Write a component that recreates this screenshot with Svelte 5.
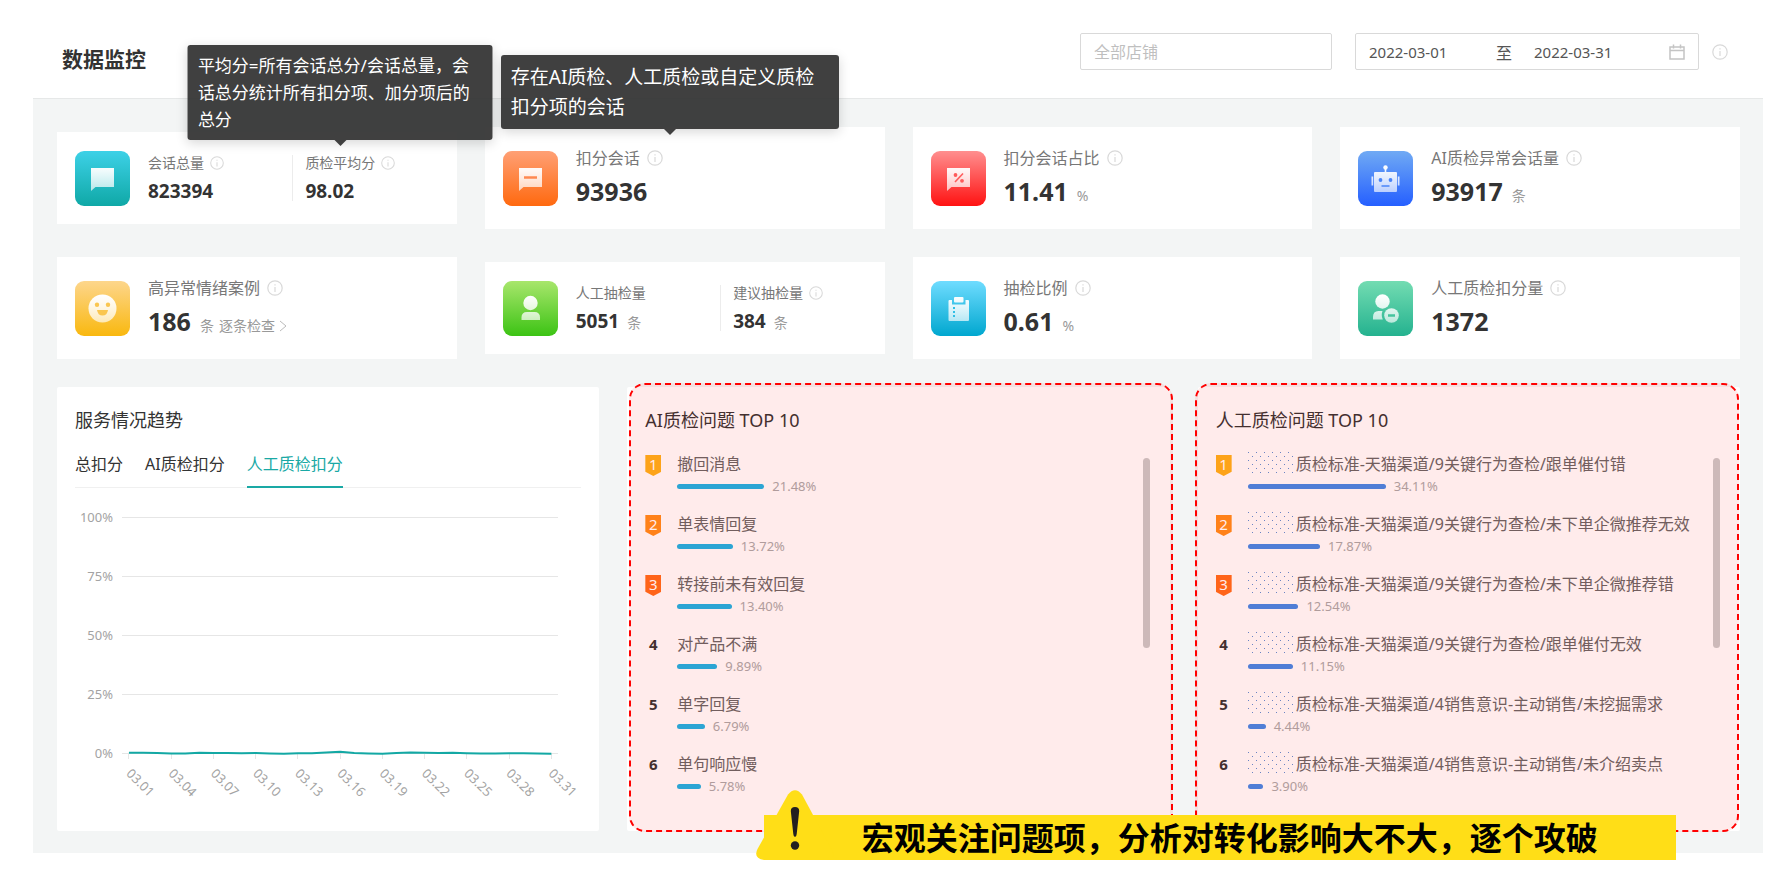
<script lang="ts">
  type Metric = { label: string; value: string; unit?: string; info?: boolean; link?: string; tip?: string };
  type Card = { icon: string; items: Metric[]; tip?: string };
  type Issue = { name: string; rate: number; masked?: boolean };

  const cards: Card[] = [
    {
      icon: 'chat',
      items: [
        { label: '会话总量', value: '823394', info: true },
        {
          label: '质检平均分',
          value: '98.02',
          info: true,
          tip: '平均分=所有会话总分/会话总量，会话总分统计所有扣分项、加分项后的总分',
        },
      ],
    },
    {
      icon: 'minus',
      items: [{ label: '扣分会话', value: '93936', info: true }],
      tip: '存在AI质检、人工质检或自定义质检扣分项的会话',
    },
    { icon: 'percent', items: [{ label: '扣分会话占比', value: '11.41', unit: '%', info: true }] },
    { icon: 'robot', items: [{ label: 'AI质检异常会话量', value: '93917', unit: '条', info: true }] },
    { icon: 'smile', items: [{ label: '高异常情绪案例', value: '186', unit: '条', info: true, link: '逐条检查' }] },
    {
      icon: 'person',
      items: [
        { label: '人工抽检量', value: '5051', unit: '条' },
        { label: '建议抽检量', value: '384', unit: '条', info: true },
      ],
    },
    { icon: 'clipboard', items: [{ label: '抽检比例', value: '0.61', unit: '%', info: true }] },
    { icon: 'deduct', items: [{ label: '人工质检扣分量', value: '1372', info: true }] },
  ];

  const aiIssues: Issue[] = [
    { name: '撤回消息', rate: 21.48 },
    { name: '单表情回复', rate: 13.72 },
    { name: '转接前未有效回复', rate: 13.4 },
    { name: '对产品不满', rate: 9.89 },
    { name: '单字回复', rate: 6.79 },
    { name: '单句响应慢', rate: 5.78 },
  ];

  const manualIssues: Issue[] = [
    { name: '质检标准-天猫渠道/9关键行为查检/跟单催付错', rate: 34.11, masked: true },
    { name: '质检标准-天猫渠道/9关键行为查检/未下单企微推荐无效', rate: 17.87, masked: true },
    { name: '质检标准-天猫渠道/9关键行为查检/未下单企微推荐错', rate: 12.54, masked: true },
    { name: '质检标准-天猫渠道/9关键行为查检/跟单催付无效', rate: 11.15, masked: true },
    { name: '质检标准-天猫渠道/4销售意识-主动销售/未挖掘需求', rate: 4.44, masked: true },
    { name: '质检标准-天猫渠道/4销售意识-主动销售/未介绍卖点', rate: 3.9, masked: true },
  ];

  const tabs = ['总扣分', 'AI质检扣分', '人工质检扣分'];
  let activeTab = $state(2);
  let shop = $state('');
  let startDate = $state('2022-03-01');
  let endDate = $state('2022-03-31');

  // chart geometry, in viewBox units
  const left = 54;
  const right = 477;
  const top = 30;
  const bottom = 266;
  const levels = [100, 75, 50, 25, 0];
  const days = ['03.01', '03.04', '03.07', '03.10', '03.13', '03.16', '03.19', '03.22', '03.25', '03.28', '03.31'];
  const series = [
    0.4, 0.4, 0.3, 0.1, 0.1, 0.4, 0.3, 0.3, 0.2, 0.3, 0.1, 0, 0.2, 0.2, 0.5, 0.8, 0.3, 0.1, 0, 0.3, 0.5, 0.4, 0.3,
    0.4, 0.2, 0.1, 0.1, 0.2, 0.2, 0.1, 0,
  ];

  const yOf = (v: number) => bottom - (v / 100) * (bottom - top);
  const xOf = (i: number, n: number) => left + (i / (n - 1)) * (right - left);
  const points = series.map((v, i) => `${xOf(i, series.length)},${yOf(v)}`).join(' ');
</script>

{#snippet infoIcon()}
  <svg class="info" viewBox="0 0 16 16" aria-hidden="true">
    <circle cx="8" cy="8" r="7.2" />
    <path d="M8 7v5M8 4.2v1.3" />
  </svg>
{/snippet}

{#snippet cardIcon(name: string)}
  <svg class="icon {name}" viewBox="0 0 55 55" aria-hidden="true">
    {#if name === 'chat'}
      <path class="glyph" d="M16 17h23v19H20.500l-4.500 4z" />
    {:else if name === 'minus'}
      <path class="glyph" d="M16 17h23v19H20.500l-4.500 4z" />
      <path class="cut" d="M21 26.500h13" />
    {:else if name === 'percent'}
      <path class="glyph" d="M16 17h23v19H20.500l-4.500 4z" />
      <path class="cut thin" d="M24 31l8-8.500" />
      <circle class="dot" cx="24.500" cy="24" r="1.900" />
      <circle class="dot" cx="31" cy="29.800" r="1.900" />
    {:else if name === 'robot'}
      <path class="glyph" d="M26.700 17.500h1.600V21H38q1 0 1 1v18q0 1-1 1H17q-1 0-1-1V22q0-1 1-1h9.700z" />
      <circle class="glyph" cx="27.500" cy="16.500" r="2.200" />
      <path class="glyph" d="M13.500 25.500h1.700v9h-1.700zM39.800 25.500h1.700v9h-1.700z" />
      <circle class="dot" cx="22.500" cy="29" r="1.900" />
      <circle class="dot" cx="32.500" cy="29" r="1.900" />
      <path class="cut thin" d="M23.500 35h8" />
    {:else if name === 'smile'}
      <circle class="glyph" cx="27.500" cy="27.500" r="14" />
      <circle class="dot" cx="22" cy="23.800" r="2.200" />
      <circle class="dot" cx="33" cy="23.800" r="2.200" />
      <path class="dot" d="M22 29h11q-.8 5.500-5.500 5.500T22 29z" />
    {:else if name === 'person'}
      <circle class="glyph" cx="27.500" cy="22" r="7.200" />
      <path class="glyph" d="M18.500 39v-2.500q0-5.500 5.500-5.500h7.500q5.500 0 5.500 5.500V39z" />
    {:else if name === 'clipboard'}
      <path class="glyph" d="M18.500 19H21v4.500h13.500V19h2.500q1 0 1 1v19q0 1-1 1H18.500q-1 0-1-1V20q0-1 1-1z" />
      <rect class="glyph" x="23" y="16" width="9.500" height="5.500" rx="1" />
      <path class="cut dash" d="M23 26v11" />
    {:else}
      <circle class="glyph" cx="24.500" cy="20.500" r="7.200" />
      <path class="glyph" d="M15 38.500V36q0-6 5.500-6h4q-1.700 4.200.3 8.500z" />
      <circle class="glyph" cx="33.500" cy="34.500" r="7.300" />
      <path class="cut" d="M30 34.500h7" />
    {/if}
  </svg>
{/snippet}

{#snippet issuePanel(title: string, issues: Issue[], tone: string)}
  <section class="panel flagged {tone}">
    <h2>{title}</h2>
    <div class="scroll">
      <ol>
        {#each issues as issue, i}
          <li>
            <span class="rank rank-{i + 1}" class:medal={i < 3}>{i + 1}</span>
            <div class="issue">
              <div class="name">
                {#if issue.masked}<span class="mask"></span>{/if}{issue.name}
              </div>
              <div class="rate">
                <span class="bar" style="width: {issue.rate * 0.87}%"></span>
                <span>{issue.rate.toFixed(2)}%</span>
              </div>
            </div>
          </li>
        {/each}
      </ol>
      <div class="thumb"></div>
    </div>
  </section>
{/snippet}

<svg class="defs" aria-hidden="true">
  <linearGradient id="glyph-fade" gradientUnits="userSpaceOnUse" x1="0" y1="14" x2="0" y2="42">
    <stop offset="0" stop-color="#fff" />
    <stop offset="1" stop-color="#fff" stop-opacity="0.65" />
  </linearGradient>
</svg>

<div class="page">
  <header>
    <h1>数据监控</h1>
    <input class="shop" type="text" placeholder="全部店铺" aria-label="店铺" bind:value={shop} />
    <div class="range">
      <input type="text" aria-label="开始日期" bind:value={startDate} />
      <span class="to">至</span>
      <input type="text" aria-label="结束日期" bind:value={endDate} />
      <svg class="calendar" viewBox="0 0 16 16" aria-hidden="true">
        <path d="M1 3h14v12H1zM1 6.500h14M4.500 0.500v4M11.500 0.500v4" />
      </svg>
    </div>
    {@render infoIcon()}
  </header>

  <main>
    <div class="cards">
      {#each cards as card}
        <article class="card" class:split={card.items.length > 1}>
          {@render cardIcon(card.icon)}
          <div class="metrics">
            {#each card.items as item}
              <div class="metric">
                <div class="label">
                  <span class="anchor">
                    {item.label}
                    {#if item.tip}<span class="tip" role="tooltip">{item.tip}</span>{/if}
                  </span>
                  {#if item.info}{@render infoIcon()}{/if}
                </div>
                <div class="value">
                  <strong>{item.value}</strong>
                  {#if item.unit}<span class="unit">{item.unit}</span>{/if}
                  {#if item.link}
                    <a href="#cases">
                      {item.link}
                      <svg class="arrow" viewBox="0 0 8 12" aria-hidden="true"><path d="M1 1l6 5-6 5" /></svg>
                    </a>
                  {/if}
                </div>
              </div>
            {/each}
          </div>
          {#if card.tip}<span class="tip large" role="tooltip">{card.tip}</span>{/if}
        </article>
      {/each}
    </div>

    <div class="panels">
      <section class="panel">
        <h2>服务情况趋势</h2>
        <div class="tabs" role="tablist">
          {#each tabs as tab, i}
            <button role="tab" aria-selected={i === activeTab} class:active={i === activeTab} onclick={() => (activeTab = i)}>{tab}</button>
          {/each}
        </div>
        <svg class="chart" viewBox="0 0 507 324" role="img" aria-label="服务情况趋势">
          {#each levels as level}
            <line class="grid" x1="47" x2="484" y1={yOf(level)} y2={yOf(level)} />
            <text x="38" y={yOf(level)} dy="4" text-anchor="end">{level}%</text>
          {/each}
          {#each days as day, i}
            <line class="grid" x1={xOf(i, days.length)} x2={xOf(i, days.length)} y1={bottom} y2={bottom + 5} />
            <text transform="translate({xOf(i, days.length)} {bottom + 17}) rotate(45)" dy="5">{day}</text>
          {/each}
          <polyline {points} />
        </svg>
      </section>

      {@render issuePanel('AI质检问题 TOP 10', aiIssues, 'sky')}
      {@render issuePanel('人工质检问题 TOP 10', manualIssues, 'indigo')}

      <div class="banner">
        <svg class="warning" viewBox="0 0 78 70" aria-hidden="true">
          <path class="sign" d="M32 4.500Q39-4 46 4.500L76.500 61q3 9-6 9H8Q-3 68 1.500 59z" />
          <path d="M34.800 21q0-4 4.200-4t4.200 4l-2.500 23q-.3 3-1.700 3t-1.700-3z" />
          <circle cx="39" cy="55.500" r="4.200" />
        </svg>
        <p>宏观关注问题项，分析对转化影响大不大，逐个攻破</p>
      </div>
    </div>
  </main>
</div>

<style>
  :global(body) {
    margin: 0;
    background: #fff;
  }

  .page {
    padding: 0 25px 24px 33px;
    font-family: "Noto Sans", "Noto Sans CJK SC", sans-serif;
    font-size: 16px;
    color: #333;
  }

  .page * {
    box-sizing: border-box;
  }

  .defs {
    position: absolute;
    width: 0;
    height: 0;
  }

  h1, h2, p, ol {
    margin: 0;
    padding: 0;
  }

  input, button {
    font: inherit;
    color: inherit;
    border: 0;
    padding: 0;
    background: none;
    outline: none;
  }

  header {
    display: flex;
    align-items: flex-start;
    padding: 33px 35px 13px 29px;
    border-bottom: 1px solid #e6e8e8;
  }

  h1 {
    flex: 1;
    font-size: 21px;
    line-height: 52px;
    font-weight: 700;
  }

  .shop,
  .range {
    height: 37px;
    border: 1px solid #d9d9d9;
    border-radius: 2px;
    padding: 0 13px;
  }

  .shop {
    width: 252px;
    margin-right: 23px;
  }

  .shop::placeholder {
    color: #bfbfbf;
  }

  .range {
    display: flex;
    align-items: center;
    width: 344px;
    margin-right: 13px;
    color: #555;
    font-size: 15px;
  }

  .range input {
    width: 127px;
  }

  .to {
    width: 38px;
    font-size: 16px;
  }

  .range input + svg {
    margin-left: auto;
  }

  .calendar {
    flex: none;
    width: 16px;
    height: 16px;
    fill: none;
    stroke: #c4c4c4;
    stroke-width: 1.5;
  }

  .info {
    flex: none;
    width: 16px;
    height: 16px;
    fill: none;
    stroke: #d9d9d9;
    stroke-width: 1.2;
  }

  header .info {
    margin-top: 11px;
  }

  main {
    padding: 28px 23px 22px 24px;
    background: #f3f5f5;
  }

  .cards {
    display: grid;
    grid-template-columns: repeat(4, 1fr);
    align-items: center;
    gap: 28px;
  }

  .card {
    position: relative;
    display: flex;
    align-items: center;
    gap: 18px;
    padding: 18px;
    background: #fff;
  }

  .icon {
    flex: none;
    width: 55px;
    height: 55px;
    border-radius: 9px;
  }

  .glyph {
    fill: url(#glyph-fade);
  }

  .dot {
    fill: var(--mid);
  }

  .cut {
    fill: none;
    stroke: var(--mid);
    stroke-width: 2.4;
  }

  .thin {
    stroke-width: 1.6;
  }

  .dash {
    stroke-width: 2;
    stroke-dasharray: 2 2;
  }

  .chat { background: linear-gradient(#3dd1e7, #0fa8a6); }
  .minus { --mid: #ff8850; background: linear-gradient(#ffa075, #ff690f); }
  .percent { --mid: #ff5a5a; background: linear-gradient(#ff8f8f, #ff1212); }
  .robot { --mid: #4a84f8; background: linear-gradient(#70aaf4, #255fff); }
  .smile { --mid: #fac650; background: linear-gradient(#fdd68c, #f9b80f); }
  .person { background: linear-gradient(#a8e66c, #3cc314); }
  .clipboard { --mid: #30bfe6; background: linear-gradient(#6fdcff, #00a7cf); }
  .deduct { --mid: #45c49d; background: linear-gradient(#73dcb2, #24b28f); }

  .metrics {
    flex: 1;
    display: grid;
    grid-auto-flow: column;
    grid-auto-columns: 1fr;
  }

  .label {
    display: flex;
    align-items: center;
    gap: 7px;
    line-height: 26px;
    color: #777;
    white-space: nowrap;
  }

  .anchor {
    position: relative;
  }

  .value {
    display: flex;
    align-items: baseline;
    line-height: 40px;
  }

  .value strong {
    font-size: 25px;
  }

  .unit,
  .value a {
    font-size: 14px;
    line-height: 20px;
    color: #999;
  }

  .unit {
    margin-left: 9px;
  }

  .value a {
    margin-left: 5px;
    text-decoration: none;
  }

  .arrow {
    width: 8px;
    height: 12px;
    fill: none;
    stroke: #bbb;
    vertical-align: -1px;
  }

  .split .metric + .metric {
    position: relative;
    padding-left: 12px;
  }

  .split .metric + .metric::before {
    content: "";
    position: absolute;
    left: -1px;
    top: 5px;
    bottom: 5px;
    width: 1px;
    background: #ececec;
  }

  .split .label {
    font-size: 14px;
    gap: 6px;
  }

  .split .info {
    width: 14px;
    height: 14px;
  }

  .split .value {
    line-height: 30px;
  }

  .split .value strong {
    font-size: 19px;
  }

  .split .unit {
    margin-left: 8px;
  }

  .tip {
    position: absolute;
    z-index: 2;
    bottom: calc(100% + 10px);
    left: 50%;
    width: 305px;
    padding: 7px 10px;
    transform: translateX(-50%);
    border-radius: 3px;
    background: rgba(48, 48, 48, 0.92);
    box-shadow: 0 3px 12px rgba(0, 0, 0, 0.16);
    color: #fff;
    font-size: 17px;
    line-height: 27px;
    white-space: normal;
  }

  .tip::after {
    content: "";
    position: absolute;
    top: 100%;
    left: 50%;
    margin-left: -6px;
    border: 6px solid transparent;
    border-top-color: #404040;
    border-bottom: 0;
  }

  .tip.large {
    left: 16px;
    bottom: calc(100% - 2px);
    width: 338px;
    transform: none;
    font-size: 19px;
    line-height: 30px;
  }

  .panels {
    position: relative;
    display: grid;
    grid-template-columns: repeat(3, minmax(0, 1fr));
    gap: 28px;
    margin-top: 28px;
  }

  .panel {
    position: relative;
    padding: 19px 18px;
    background: #fff;
    border-radius: 2px;
  }

  h2 {
    margin-bottom: 18px;
    font-size: 18px;
    line-height: 28px;
    font-weight: 400;
  }

  /* highlight laid over a panel, text included */
  .flagged::after {
    content: "";
    position: absolute;
    inset: -4px -3px -1px 2px;
    border: 2px dashed #f00;
    border-radius: 16px;
    background: rgba(255, 0, 0, 0.08);
    pointer-events: none;
  }

  .indigo::after {
    inset: -4px 1px -1px -3px;
  }

  .tabs {
    display: flex;
    gap: 22px;
    border-bottom: 1px solid #f0f0f0;
  }

  .tabs button {
    margin-bottom: -1px;
    padding-bottom: 10px;
    border-bottom: 2px solid transparent;
    line-height: 24px;
    cursor: pointer;
  }

  .tabs .active {
    color: #1aa9a5;
    border-color: #1aa9a5;
  }

  .chart {
    display: block;
    width: 100%;
    overflow: visible;
  }

  .chart text {
    font-size: 13px;
    fill: #a3a3a3;
  }

  .grid {
    stroke: #e6e6e6;
    shape-rendering: crispEdges;
  }

  .chart polyline {
    fill: none;
    stroke: #13a8a4;
    stroke-width: 2;
  }

  .scroll {
    display: flex;
    align-items: flex-start;
    padding-right: 2px;
  }

  ol {
    flex: 1;
    display: grid;
    gap: 16px;
    list-style: none;
  }

  li {
    display: flex;
    gap: 16px;
  }

  .rank {
    flex: none;
    width: 16px;
    font-size: 15px;
    line-height: 24px;
    font-weight: 700;
    text-align: center;
  }

  .medal {
    height: 21px;
    margin-top: 3px;
    line-height: 18px;
    font-weight: 400;
    color: #fff;
    clip-path: polygon(0 0, 100% 0, 100% 80%, 50% 100%, 0 80%);
  }

  .rank-1 { background: #fdb11c; }
  .rank-2 { background: #ff8d1c; }
  .rank-3 { background: #ff6d1c; }

  .issue {
    flex: 1;
  }

  .name {
    display: flex;
    line-height: 24px;
    color: #666;
    white-space: nowrap;
  }

  .mask {
    width: 45px;
    margin-right: 3px;
    background-image:
      conic-gradient(at 1px 1px, transparent 75%, #5f90d4 0),
      conic-gradient(at 1px 1px, transparent 75%, #5f90d4 0);
    background-size: 8px 8px;
    background-position: 0 0, 4px 4px;
  }

  .rate {
    display: flex;
    align-items: center;
    gap: 8px;
    font-size: 13px;
    line-height: 20px;
    color: #aaa;
  }

  .bar {
    height: 5px;
    border-radius: 3px;
  }

  .sky .bar {
    background: #1bb3e6;
  }

  .indigo .bar {
    background: #4289e9;
  }

  .thumb {
    width: 7px;
    height: 190px;
    margin-top: 6px;
    border-radius: 4px;
    background: #c9c9c9;
  }

  .banner {
    position: absolute;
    left: 42%;
    right: 64px;
    bottom: -29px;
    padding-left: 98px;
    background: #ffde17;
    color: #000;
  }

  .banner p {
    font-size: 32px;
    line-height: 45px;
    font-weight: 700;
    white-space: nowrap;
  }

  .warning {
    position: absolute;
    left: -8px;
    bottom: 0;
    width: 78px;
    height: 70px;
    fill: #231f20;
  }

  .sign {
    fill: #ffde17;
  }
</style>
